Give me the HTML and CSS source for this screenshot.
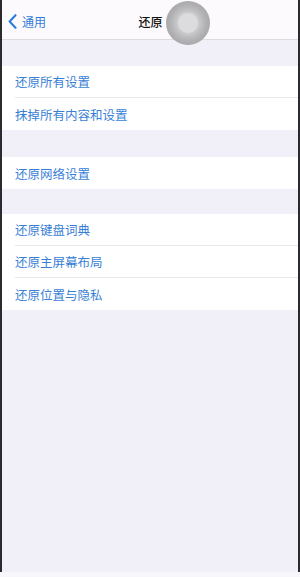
FILE: index.html
```html
<!DOCTYPE html>
<html lang="zh-CN">
<head>
    <meta charset="UTF-8">
    <meta name="viewport" content="width=device-width, initial-scale=1.0">
    <title>还原</title>
    <link rel="stylesheet" href="styles.css">
</head>
<body>
    <div class="screen">
        <div class="navbar">
            <a class="back" href="#">
                <svg class="chevron" width="9" height="15" viewBox="0 0 9 15">
                    <path d="M7.5 1.2 L1.6 7.5 L7.5 13.8" fill="none" stroke="#2f7ddb" stroke-width="2.1" stroke-linecap="round" stroke-linejoin="round"/>
                </svg>
                <span>通用</span>
            </a>
            <div class="title">还原</div>
        </div>

        <div class="group first">
            <div class="row">还原所有设置</div>
            <div class="row">抹掉所有内容和设置</div>
        </div>

        <div class="group second">
            <div class="row">还原网络设置</div>
        </div>

        <div class="group third">
            <div class="row">还原键盘词典</div>
            <div class="row">还原主屏幕布局</div>
            <div class="row">还原位置与隐私</div>
        </div>

        <!-- assistive touch button floating over the nav bar -->
        <div class="touch">
            <div class="touch-inner"></div>
        </div>
    </div>
    <div class="bottom-strip"></div>
</body>
</html>
```

FILE: styles.css
```css
html, body {
    margin: 0;
    padding: 0;
}
body {
    width: 300px;
    height: 577px;
    overflow: hidden;
    background: #f7f6fa;
    font-family: "Noto Sans CJK SC", "Noto Sans", sans-serif;
}
.screen {
    position: relative;
    box-sizing: border-box;
    width: 300px;
    height: 572px;
    background: #f1eff7;
    border-left: 2px solid #2b2a2e;
    border-right: 2px solid #2b2a2e;
    overflow: hidden;
}
.navbar {
    position: relative;
    box-sizing: border-box;
    height: 40px;
    padding-top: 4px;
    background: #fcfafd;
    border-bottom: 1px solid #dddce2;
    display: flex;
    align-items: center;
    justify-content: center;
}
.back {
    position: absolute;
    left: 6px;
    top: 4px;
    bottom: 0;
    display: flex;
    align-items: center;
    gap: 5px;
    color: #2f7ddb;
    text-decoration: none;
    font-size: 12px;
}
.chevron {
    display: block;
}
.title {
    font-size: 12px;
    color: #111;
    font-weight: 500;
    margin-left: 1px;
}
.group {
    background: #fff;
}
.first {
    margin-top: 26px;
}
.second {
    margin-top: 27px;
}
.third {
    margin-top: 25px;
}
.row {
    height: 31px;
    margin-left: 13px;
    display: flex;
    align-items: center;
    font-size: 12.5px;
    color: #3a7fd6;
    border-bottom: 1px solid #e9e8ed;
}
.row:last-child {
    border-bottom: none;
    height: 32px;
}
.touch {
    position: absolute;
    left: 164px;
    top: 1px;
    width: 44px;
    height: 44px;
    border-radius: 50%;
    background: radial-gradient(circle, #d9d8db 0, #d2d1d4 9px, #c1c0c3 13px, #b1b0b3 18px, #a9a8ab 22px);
    display: flex;
    align-items: center;
    justify-content: center;
}
.touch-inner {
    width: 20px;
    height: 20px;
    border-radius: 50%;
    background: #dcdbde;
}
.bottom-strip {
    height: 5px;
    background: #f7f6fa;
}
```
